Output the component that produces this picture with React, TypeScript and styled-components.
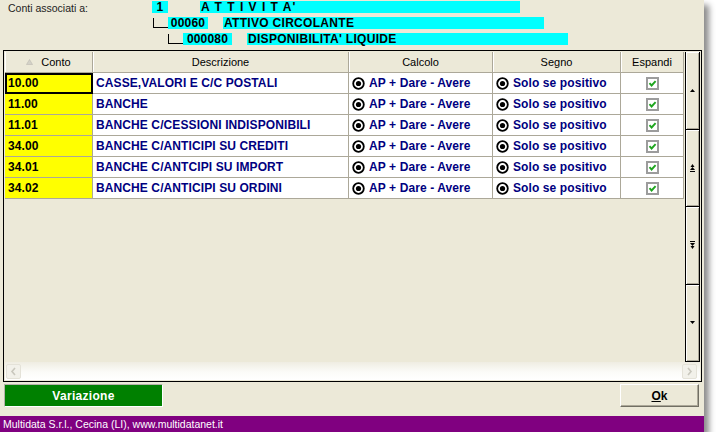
import React from "react";
import styled, { createGlobalStyle } from "styled-components";

const Global = createGlobalStyle`
  html, body { margin: 0; padding: 0; background: #ffffff; }
  body { font-family: "Liberation Sans", Arial, sans-serif; }
`;

const Window = styled.div`
  width: 704px;
  height: 432px;
  background: #ece9d8;
  display: flex;
  flex-direction: column;
  box-shadow: 5px 5px 6px rgba(0, 0, 0, 0.45);
  overflow: hidden;
`;

const Top = styled.div`
  height: 50px;
  display: flex;
  flex-shrink: 0;
`;

const Label = styled.div`
  width: 152px;
  padding: 2px 0 0 8px;
  box-sizing: border-box;
  font-size: 10.5px;
  color: #222;
  line-height: 13px;
`;

const Tree = styled.div`
  display: flex;
  flex-direction: column;
  gap: 4px;
  padding-top: 1px;
`;

const TreeRow = styled.div<{ $indent: number }>`
  display: flex;
  height: 12px;
  margin-left: ${(p) => p.$indent}px;
`;

const Connector = styled.div<{ $w: number }>`
  width: ${(p) => p.$w}px;
  height: 9px;
  margin-left: 1px;
  margin-top: 1px;
  border-left: 1px solid #000;
  border-bottom: 1px solid #000;
  align-self: flex-start;
`;

const CodeBox = styled.div<{ $w: number }>`
  width: ${(p) => p.$w}px;
  background: #00ffff;
  font-size: 12px;
  font-weight: bold;
  line-height: 12px;
  text-align: center;
  color: #000;
  letter-spacing: 0.2px;
`;

const NameBar = styled.div<{ $gap: number; $w: number; $spacing?: number }>`
  margin-left: ${(p) => p.$gap}px;
  width: ${(p) => p.$w}px;
  background: #00ffff;
  font-size: 12px;
  font-weight: bold;
  line-height: 12px;
  padding-left: 1px;
  box-sizing: border-box;
  color: #000;
  white-space: pre;
  letter-spacing: ${(p) => p.$spacing ?? 0.3}px;
`;

const GridFrame = styled.div`
  margin-left: 3px;
  width: 699px;
  height: 332px;
  box-sizing: border-box;
  border: 1px solid #000;
  padding: 1px;
  display: grid;
  grid-template-columns: 679px 16px;
  grid-template-rows: 310px 18px;
  flex-shrink: 0;
`;

const Table = styled.div`
  display: flex;
  flex-direction: column;
  overflow: hidden;
`;

const COLS = "88px 256px 144px 128px 63px";

const HeaderRow = styled.div`
  display: grid;
  grid-template-columns: ${COLS};
  height: 21px;
`;

const HeaderCell = styled.div`
  display: flex;
  align-items: center;
  justify-content: center;
  gap: 8px;
  background: #ece9d8;
  border-right: 1px solid #aca899;
  border-bottom: 1px solid #aca899;
  box-shadow: inset 1px 0 0 #ffffff;
  font-size: 11px;
  color: #000;
`;

const Row = styled.div`
  display: grid;
  grid-template-columns: ${COLS};
  height: 21px;
`;

const Cell = styled.div<{ $bg?: string; $focus?: boolean; $center?: boolean; $color?: string }>`
  display: flex;
  align-items: center;
  justify-content: ${(p) => (p.$center ? "center" : "flex-start")};
  gap: 4px;
  padding-left: ${(p) => (p.$center ? 0 : 3)}px;
  box-sizing: border-box;
  background: ${(p) => p.$bg || "#ffffff"};
  border-right: 1px solid #aca899;
  border-bottom: 1px solid #aca899;
  font-size: 12px;
  font-weight: bold;
  letter-spacing: 0.1px;
  color: ${(p) => p.$color || "#000080"};
  white-space: nowrap;
  overflow: hidden;
  outline: ${(p) => (p.$focus ? "2px solid #000" : "none")};
  outline-offset: -2px;
`;

const VScroll = styled.div`
  display: flex;
  flex-direction: column;
`;

const VButton = styled.div`
  flex: 1;
  margin-left: 1px;
  width: 15px;
  box-sizing: border-box;
  border-left: 1px solid #000;
  border-right: 1px solid #000;
  border-bottom: 1px solid #000;
  box-shadow: inset 1px 1px 0 #ffffff, inset -1px -1px 0 #aca899;
  background: #ece9d8;
  display: flex;
  align-items: center;
  justify-content: center;
`;

const HScroll = styled.div`
  grid-column: 1 / -1;
  display: flex;
  align-items: center;
  justify-content: space-between;
  padding: 0 3px 0 1px;
  background: linear-gradient(to bottom, #efede2 0%, #fbfbf8 55%, #ffffff 100%);
`;

const HArrow = styled.div`
  width: 15px;
  height: 15px;
  box-sizing: border-box;
  border: 1px solid #e4e2d8;
  border-radius: 2px;
  background: #f2f1ea;
  display: flex;
  align-items: center;
  justify-content: center;
`;

const ButtonRow = styled.div`
  display: flex;
  justify-content: space-between;
  padding: 0 5px 0 4px;
  margin-top: 2px;
  height: 23px;
`;

const GreenButton = styled.div`
  width: 159px;
  box-sizing: border-box;
  background: #008000;
  border: 1px solid;
  border-color: #b4b2a8 #ffffff #ffffff #b4b2a8;
  color: #ffffff;
  font-size: 12px;
  font-weight: bold;
  letter-spacing: 0.3px;
  display: flex;
  align-items: center;
  justify-content: center;
`;

const OkButton = styled.div`
  width: 79px;
  box-sizing: border-box;
  background: #ece9d8;
  border: 1px solid;
  border-color: #ffffff #716f64 #716f64 #ffffff;
  box-shadow: inset -1px -1px 0 #aca899;
  color: #000;
  font-size: 12px;
  font-weight: bold;
  display: flex;
  align-items: center;
  justify-content: center;
  u { text-decoration: underline; }
`;

const Footer = styled.div`
  margin-top: auto;
  height: 16px;
  background: #800080;
  color: #ffffff;
  font-size: 10.5px;
  line-height: 16px;
  padding-left: 3px;
  flex-shrink: 0;
`;

const Radio = () => (
  <svg width="13" height="13" viewBox="0 0 13 13">
    <circle cx="6.5" cy="6.5" r="5.3" fill="#fff" stroke="#000" strokeWidth="1.8" />
    <circle cx="6.5" cy="6.5" r="2.6" fill="#000" />
  </svg>
);

const Check = () => (
  <svg width="13" height="13" viewBox="0 0 13 13">
    <rect x="1" y="1" width="11" height="11" fill="#fff" stroke="#9c9c9c" strokeWidth="2" />
    <path d="M3.5 6.2 L5.6 8.5 L9.6 4.2" fill="none" stroke="#1ea51e" strokeWidth="1.9" />
  </svg>
);

const SortTri = () => (
  <svg width="7" height="6" viewBox="0 0 7 6">
    <polygon points="3.5,0.5 0.5,5.5 6.5,5.5" fill="#d4d2c8" stroke="#bdbbb1" strokeWidth="0.6" />
  </svg>
);

const Up = () => (
  <svg width="5" height="3" viewBox="0 0 5 3">
    <polygon points="2.5,0 0,3 5,3" fill="#000" />
  </svg>
);
const Down = () => (
  <svg width="5" height="3" viewBox="0 0 5 3">
    <polygon points="0,0 5,0 2.5,3" fill="#000" />
  </svg>
);
const DoubleUp = () => (
  <svg width="5" height="8" viewBox="0 0 5 8">
    <polygon points="2.5,0 0.5,3 4.5,3" fill="#000" />
    <polygon points="2.5,3 0,6 5,6" fill="#000" />
    <rect x="0" y="7" width="5" height="1" fill="#000" />
  </svg>
);
const DoubleDown = () => (
  <svg width="5" height="8" viewBox="0 0 5 8">
    <rect x="0" y="0" width="5" height="1" fill="#000" />
    <polygon points="0,2 5,2 2.5,5" fill="#000" />
    <polygon points="0.5,5 4.5,5 2.5,8" fill="#000" />
  </svg>
);
const Chevron = ({ dir }: { dir: "l" | "r" }) => (
  <svg width="7" height="9" viewBox="0 0 7 9">
    <path
      d={dir === "l" ? "M5 1 L2 4.5 L5 8" : "M2 1 L5 4.5 L2 8"}
      fill="none"
      stroke="#c9c7bd"
      strokeWidth="1.6"
    />
  </svg>
);

const rows = [
  ["10.00", "CASSE,VALORI E C/C POSTALI"],
  ["11.00", "BANCHE"],
  ["11.01", "BANCHE C/CESSIONI INDISPONIBILI"],
  ["34.00", "BANCHE C/ANTICIPI SU CREDITI"],
  ["34.01", "BANCHE C/ANTCIPI SU IMPORT"],
  ["34.02", "BANCHE C/ANTICIPI SU ORDINI"],
];

export default function App() {
  return (
    <>
      <Global />
      <Window>
        <Top>
          <Label>Conti associati a:</Label>
          <Tree>
            <TreeRow $indent={0}>
              <CodeBox $w={16}>1</CodeBox>
              <NameBar $gap={32} $w={320} $spacing={1}>A T T I V I T A'</NameBar>
            </TreeRow>
            <TreeRow $indent={0}>
              <Connector $w={14} />
              <CodeBox $w={40}>00060</CodeBox>
              <NameBar $gap={15} $w={321}>ATTIVO CIRCOLANTE</NameBar>
            </TreeRow>
            <TreeRow $indent={15}>
              <Connector $w={14} />
              <CodeBox $w={49}>000080</CodeBox>
              <NameBar $gap={15} $w={321}>DISPONIBILITA' LIQUIDE</NameBar>
            </TreeRow>
          </Tree>
        </Top>
        <GridFrame>
          <Table>
            <HeaderRow>
              <HeaderCell>
                <SortTri />
                <span>Conto</span>
              </HeaderCell>
              <HeaderCell>Descrizione</HeaderCell>
              <HeaderCell>Calcolo</HeaderCell>
              <HeaderCell>Segno</HeaderCell>
              <HeaderCell>Espandi</HeaderCell>
            </HeaderRow>
            {rows.map(([code, desc], i) => (
              <Row key={code}>
                <Cell $bg="#ffff00" $color="#000" $focus={i === 0}>{code}</Cell>
                <Cell>{desc}</Cell>
                <Cell>
                  <Radio />
                  AP + Dare - Avere
                </Cell>
                <Cell>
                  <Radio />
                  Solo se positivo
                </Cell>
                <Cell $center>
                  <Check />
                </Cell>
              </Row>
            ))}
          </Table>
          <VScroll>
            <VButton><Up /></VButton>
            <VButton><DoubleUp /></VButton>
            <VButton><DoubleDown /></VButton>
            <VButton><Down /></VButton>
          </VScroll>
          <HScroll>
            <HArrow><Chevron dir="l" /></HArrow>
            <HArrow><Chevron dir="r" /></HArrow>
          </HScroll>
        </GridFrame>
        <ButtonRow>
          <GreenButton>Variazione</GreenButton>
          <OkButton><span><u>O</u>k</span></OkButton>
        </ButtonRow>
        <Footer>Multidata S.r.l., Cecina (LI), www.multidatanet.it</Footer>
      </Window>
    </>
  );
}
